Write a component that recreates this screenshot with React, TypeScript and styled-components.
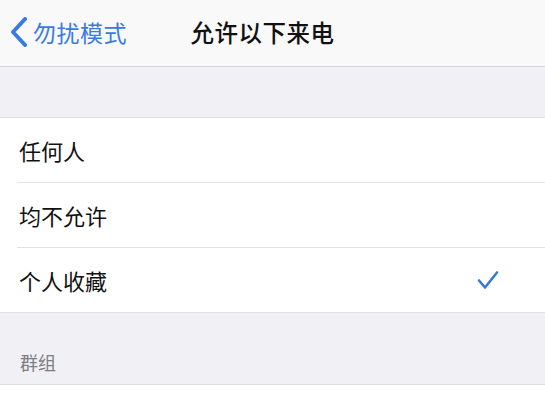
import React from 'react';
import styled, { createGlobalStyle } from 'styled-components';

const options = [
  { id: 'anyone', text: '任何人', checked: false },
  { id: 'none', text: '均不允许', checked: false },
  { id: 'favorites', text: '个人收藏', checked: true },
];

const GlobalStyle = createGlobalStyle`
  html, body {
    margin: 0;
    padding: 0;
    background: #f0f0f5;
  }
  body {
    font-family: "Noto Sans CJK SC", "Noto Sans", sans-serif;
    -webkit-font-smoothing: antialiased;
  }
`;

const Screen = styled.div`
  width: 545px;
  height: 400px;
  overflow: hidden;
  background: #f0f0f5;
  display: flex;
  flex-direction: column;
`;

const NavBar = styled.div`
  height: 67px;
  flex-shrink: 0;
  background: #f9f9f9;
  border-bottom: 1px solid #d6d6da;
  display: grid;
  grid-template-columns: 1fr auto 1fr;
  align-items: center;
  box-sizing: border-box;
  padding-right: 20px;
`;

const BackButton = styled.div`
  display: flex;
  align-items: center;
  gap: 5px;
  padding-left: 10px;
  color: #3a7be2;
  font-size: 23px;
  letter-spacing: 0.5px;
  padding-bottom: 2px;
`;

const Title = styled.div`
  font-size: 23.5px;
  font-weight: 500;
  color: #111;
  letter-spacing: 0.5px;
  padding-bottom: 2px;
`;

const Spacer = styled.div<{ $height: number }>`
  height: ${p => p.$height}px;
  flex-shrink: 0;
`;

const Group = styled.div`
  background: #fff;
  border-top: 1px solid #e2e2e6;
  border-bottom: 1px solid #e2e2e6;
`;

const Row = styled.div<{ $last?: boolean }>`
  height: 64px;
  margin-left: 17px;
  padding-left: 2px;
  padding-right: 46px;
  display: flex;
  align-items: center;
  justify-content: space-between;
  font-size: 22px;
  color: #111;
  border-bottom: ${p => (p.$last ? 'none' : '1px solid #e2e2e6')};
`;

const SectionHeader = styled.div`
  height: 71px;
  flex-shrink: 0;
  display: flex;
  align-items: flex-end;
  padding: 0 0 9px 20px;
  box-sizing: border-box;
  font-size: 18px;
  color: #7d7d82;
`;

const BottomGroup = styled.div`
  flex: 1;
  background: #fff;
  border-top: 1px solid #dcdce0;
`;

const Chevron = () => (
  <svg width="18" height="30" viewBox="0 0 18 30">
    <path d="M15 2 L3 15 L15 28" fill="none" stroke="#3a7be2" strokeWidth="4" strokeLinecap="round" strokeLinejoin="round" />
  </svg>
);

const Check = () => (
  <svg width="22" height="20" viewBox="0 0 22 20">
    <path d="M2 10.5 L8 17.5 L20 2.5" fill="none" stroke="#3a78d8" strokeWidth="2.6" strokeLinecap="round" strokeLinejoin="round" />
  </svg>
);

const App = () => {
  return (
    <Screen>
      <GlobalStyle />
      <NavBar>
        <BackButton>
          <Chevron />
          <span>勿扰模式</span>
        </BackButton>
        <Title>允许以下来电</Title>
        <div />
      </NavBar>
      <Spacer $height={50} />
      <Group>
        {options.map((o, i) => (
          <Row key={o.id} $last={i === options.length - 1}>
            <span>{o.text}</span>
            {o.checked && <Check />}
          </Row>
        ))}
      </Group>
      <SectionHeader>群组</SectionHeader>
      <BottomGroup />
    </Screen>
  );
};

export default App;
